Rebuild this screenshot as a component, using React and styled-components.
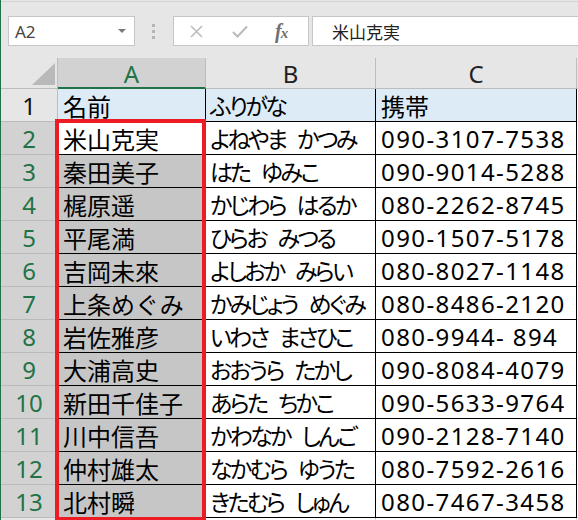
import React from 'react';
import styled, { createGlobalStyle } from 'styled-components';

const GlobalStyle = createGlobalStyle`
  html, body {
    margin: 0;
    padding: 0;
    background: #fff;
  }
  * {
    box-sizing: border-box;
  }
`;

const rows = [
  ['米山克実', 'よねやま かつみ', '090-3107-7538'],
  ['秦田美子', 'はた ゆみこ', '090-9014-5288'],
  ['梶原遥', 'かじわら はるか', '080-2262-8745'],
  ['平尾満', 'ひらお みつる', '090-1507-5178'],
  ['吉岡未來', 'よしおか みらい', '080-8027-1148'],
  ['上条めぐみ', 'かみじょう めぐみ', '080-8486-2120'],
  ['岩佐雅彦', 'いわさ まさひこ', '080-9944- 894'],
  ['大浦高史', 'おおうら たかし', '090-8084-4079'],
  ['新田千佳子', 'あらた ちかこ', '090-5633-9764'],
  ['川中信吾', 'かわなか しんご', '090-2128-7140'],
  ['仲村雄太', 'なかむら ゆうた', '080-7592-2616'],
  ['北村瞬', 'きたむら しゅん', '080-7467-3458'],
];

const Window = styled.div`
  height: 520px;
  overflow: hidden;
  border-left: 1px solid #217346;
  background: #fff;
  font-family: 'Noto Sans CJK JP', 'Noto Sans', sans-serif;
`;

const FormulaBar = styled.div`
  height: 57px;
  display: flex;
  align-items: flex-start;
  padding-top: 14px;
  background: #e6e6e6;
  border-top: 1px solid #d2d2d2;
  margin-top: 1px;
  box-shadow: 0 -1px 0 #e6e6e6;
`;

const NameBox = styled.div`
  width: 127px;
  height: 30px;
  margin-left: 7px;
  background: #fff;
  border: 1px solid #c6c6c6;
  display: flex;
  align-items: center;
  justify-content: space-between;
  padding: 0 8px 0 6px;
  font-family: 'Noto Sans', sans-serif;
  font-size: 17px;
  color: #444;
`;

const DropArrow = styled.span`
  width: 0;
  height: 0;
  border-left: 4px solid transparent;
  border-right: 4px solid transparent;
  border-top: 4px solid #7a7a7a;
`;

const Grip = styled.div`
  width: 3px;
  margin: 0 18px 0 17px;
  height: 30px;
  display: flex;
  flex-direction: column;
  justify-content: center;
  gap: 3px;
`;

const GripDot = styled.span`
  width: 3px;
  height: 3px;
  background: #b4b4b4;
`;

const ButtonBox = styled.div`
  width: 136px;
  height: 30px;
  background: #fff;
  border: 1px solid #c6c6c6;
  display: flex;
  align-items: center;
  padding-left: 16px;
  gap: 29px;
`;

const FxIcon = styled.span`
  font-family: 'Liberation Serif', serif;
  font-style: italic;
  font-weight: bold;
  font-size: 20px;
  line-height: 1;
  color: #707070;
  letter-spacing: -1px;
  margin-left: -2px;
  & small {
    font-size: 15px;
  }
`;

const FormulaInput = styled.div`
  flex: 1;
  height: 30px;
  margin-left: 3px;
  margin-right: -2px;
  background: #fff;
  border: 1px solid #c6c6c6;
  display: flex;
  align-items: center;
  padding-left: 19px;
  font-size: 17px;
  color: #222;
`;

const Sheet = styled.div`
  position: relative;
  display: grid;
  grid-template-columns: 57px 148px 170px 201px 1fr;
  grid-template-rows: 31px;
  grid-auto-rows: 33px;
`;

const Corner = styled.div`
  position: relative;
  background: #e6e6e6;
  border-right: 1px solid #bdbdbd;
  border-bottom: 1px solid #bdbdbd;
  &::after {
    content: '';
    position: absolute;
    right: 2px;
    bottom: 3px;
    width: 0;
    height: 0;
    border-left: 23px solid transparent;
    border-bottom: 22px solid #b9b9b9;
  }
`;

const ColHeader = styled.div`
  background: ${(p) => (p.$selected ? '#d2d2d2' : '#e6e6e6')};
  color: ${(p) => (p.$selected ? '#217346' : '#222')};
  border-right: 1px solid #bdbdbd;
  border-bottom: ${(p) => (p.$selected ? '2px solid #217346' : '1px solid #bdbdbd')};
  display: flex;
  align-items: center;
  justify-content: center;
  font-family: 'Noto Sans', sans-serif;
  font-size: 24px;
  padding-top: 1px;
`;

const RowHeader = styled.div`
  background: ${(p) => (p.$selected ? '#d2d2d2' : '#e6e6e6')};
  color: ${(p) => (p.$selected ? '#217346' : '#111')};
  border-right: 1px solid #bdbdbd;
  border-bottom: 1px solid #bababa;
  display: flex;
  align-items: center;
  justify-content: center;
  font-family: 'Noto Sans', sans-serif;
  font-size: 24px;
`;

const Cell = styled.div`
  background: ${(p) => p.$bg || '#fff'};
  border-right: 1px solid ${(p) => (p.$plain ? '#d4d4d4' : '#000')};
  border-bottom: 1px solid ${(p) => (p.$plain ? '#d4d4d4' : '#000')};
  display: flex;
  align-items: center;
  padding-left: ${(p) => p.$pad || 5}px;
  font-size: 24px;
  color: #000;
  white-space: pre;
  overflow: hidden;
`;

const KanaCell = styled(Cell)`
  font-size: 23px;
  font-feature-settings: 'palt';
  letter-spacing: -2.6px;
  word-spacing: 9px;
`;

const PhoneCell = styled(Cell)`
  font-family: 'Noto Sans', 'Noto Sans CJK JP', sans-serif;
  letter-spacing: 1.4px;
`;

const SelectionFrame = styled.div`
  position: absolute;
  left: 54px;
  top: 61px;
  width: 151px;
  height: 402px;
  border: 4px solid #ed1c24;
  pointer-events: none;
`;

const CrossIcon = () => (
  <svg width="13" height="13" viewBox="0 0 13 13">
    <path d="M1 1 L12 12 M12 1 L1 12" stroke="#bcbcbc" strokeWidth="1.6" fill="none" />
  </svg>
);

const CheckIcon = () => (
  <svg width="16" height="13" viewBox="0 0 16 13">
    <path d="M1 7 L5.5 11.5 L15 1.5" stroke="#bcbcbc" strokeWidth="2.2" fill="none" />
  </svg>
);

export default function App() {
  return (
    <>
      <GlobalStyle />
      <Window>
        <FormulaBar>
          <NameBox>
            A2
            <DropArrow />
          </NameBox>
          <Grip>
            <GripDot />
            <GripDot />
            <GripDot />
          </Grip>
          <ButtonBox>
            <CrossIcon />
            <CheckIcon />
            <FxIcon>
              f<small>x</small>
            </FxIcon>
          </ButtonBox>
          <FormulaInput>米山克実</FormulaInput>
        </FormulaBar>

        <Sheet>
          <Corner />
          <ColHeader $selected>A</ColHeader>
          <ColHeader>B</ColHeader>
          <ColHeader>C</ColHeader>
          <ColHeader />

          <RowHeader>1</RowHeader>
          <Cell $bg="#ddebf7">名前</Cell>
          <KanaCell $bg="#ddebf7" $pad={4}>
            ふりがな
          </KanaCell>
          <Cell $bg="#ddebf7">携帯</Cell>
          <Cell $plain />

          {rows.map(([name, kana, phone], i) => (
            <React.Fragment key={name}>
              <RowHeader $selected>{i + 2}</RowHeader>
              <Cell $bg={i === 0 ? '#fff' : '#c6c6c6'}>{name}</Cell>
              <KanaCell $pad={4}>{kana}</KanaCell>
              <PhoneCell>{phone}</PhoneCell>
              <Cell $plain />
            </React.Fragment>
          ))}

          <RowHeader />
          <Cell $plain />
          <Cell $plain />
          <Cell $plain />
          <Cell $plain />

          <SelectionFrame />
        </Sheet>
      </Window>
    </>
  );
}
